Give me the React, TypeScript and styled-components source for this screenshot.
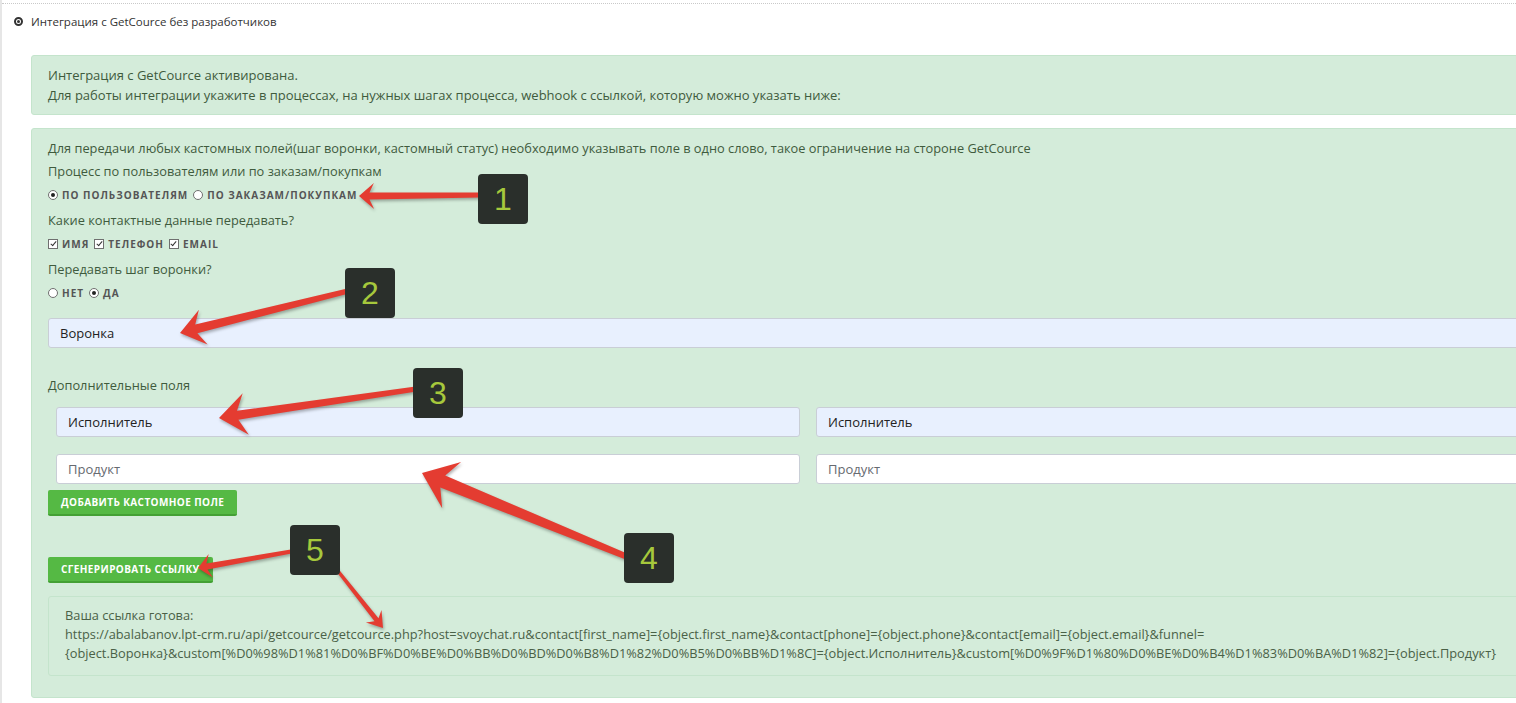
import React from "react";
import styled, { createGlobalStyle } from "styled-components";

type Pt = [number, number];

interface ArrowSpec {
  tail: Pt;
  tip: Pt;
  head: number;
  half: number;
  w0: number;
  w1: number;
}

const arrows: ArrowSpec[] = [
  { tail: [478, 195], tip: [357, 196], head: 15, half: 13, w0: 5, w1: 7 },
  { tail: [350, 290], tip: [178, 333], head: 24, half: 18, w0: 5, w1: 9 },
  { tail: [414, 389], tip: [217, 418], head: 27, half: 21, w0: 5, w1: 9 },
  { tail: [628, 558], tip: [420, 473], head: 32, half: 25, w0: 6, w1: 13 },
  { tail: [292, 551], tip: [196, 568], head: 13, half: 12, w0: 4, w1: 6 },
  { tail: [332, 566], tip: [381, 628], head: 15, half: 10, w0: 3, w1: 5 },
];

const badges = [
  { n: "1", x: 476, y: 174 },
  { n: "2", x: 343, y: 268 },
  { n: "3", x: 411, y: 368 },
  { n: "4", x: 622, y: 533 },
  { n: "5", x: 288, y: 525 },
];

const arrowPoints = ({ tail, tip, head, half, w0, w1 }: ArrowSpec) => {
  const dx = tip[0] - tail[0];
  const dy = tip[1] - tail[1];
  const len = Math.hypot(dx, dy);
  const ux = dx / len;
  const uy = dy / len;
  const nx = -uy;
  const ny = ux;
  const bx = tip[0] - ux * head;
  const by = tip[1] - uy * head;
  // shaft joins the head a little forward of the wings (swept-back look)
  const sx = tip[0] - ux * head * 0.7;
  const sy = tip[1] - uy * head * 0.7;
  const pts: Pt[] = [
    [tail[0] + (nx * w0) / 2, tail[1] + (ny * w0) / 2],
    [sx + (nx * w1) / 2, sy + (ny * w1) / 2],
    [bx + nx * half, by + ny * half],
    tip,
    [bx - nx * half, by - ny * half],
    [sx - (nx * w1) / 2, sy - (ny * w1) / 2],
    [tail[0] - (nx * w0) / 2, tail[1] - (ny * w0) / 2],
  ];
  return pts.map((p) => `${p[0].toFixed(1)},${p[1].toFixed(1)}`).join(" ");
};

const App = () => {
  return (
    <Page>
      <GlobalStyle />
      <Panel>
        <PanelHeader>
          <HeaderIcon />
          <HeaderTitle>Интеграция с GetCource без разработчиков</HeaderTitle>
        </PanelHeader>
        <PanelBody>
          <Alert>
            <Line>Интеграция с GetCource активирована.</Line>
            <Line>
              Для работы интеграции укажите в процессах, на нужных шагах
              процесса, webhook с ссылкой, которую можно указать ниже:
            </Line>
          </Alert>

          <Alert $gap={13} $padBottom={21} $size={12.8}>
            <Note>
              Для передачи любых кастомных полей(шаг воронки, кастомный статус)
              необходимо указывать поле в одно слово, такое ограничение на
              стороне GetCource
            </Note>

            <Question>Процесс по пользователям или по заказам/покупкам</Question>
            <Options>
              <Option>
                <Radio $checked />
                по пользователям
              </Option>
              <Option>
                <Radio />
                по заказам/покупкам
              </Option>
            </Options>

            <Question>Какие контактные данные передавать?</Question>
            <Options>
              <Option>
                <Check />
                имя
              </Option>
              <Option>
                <Check />
                телефон
              </Option>
              <Option>
                <Check />
                email
              </Option>
            </Options>

            <Question>Передавать шаг воронки?</Question>
            <Options $last>
              <Option>
                <Radio />
                нет
              </Option>
              <Option>
                <Radio $checked />
                да
              </Option>
            </Options>

            <TextInput $filled defaultValue="Воронка" $mb={27} />

            <SectionTitle>Дополнительные поля</SectionTitle>
            <FieldsGrid>
              <TextInput $filled defaultValue="Исполнитель" />
              <TextInput $filled defaultValue="Исполнитель" />
              <TextInput placeholder="Продукт" />
              <TextInput placeholder="Продукт" />
            </FieldsGrid>

            <GreenButton $mt={6}>Добавить кастомное поле</GreenButton>
            <GreenButton $mt={41}>Сгенерировать ссылку</GreenButton>

            <LinkBox>
              <LinkLine>Ваша ссылка готова:</LinkLine>
              <LinkLine>
                https://abalabanov.lpt-crm.ru/api/getcource/getcource.php?host=svoychat.ru&amp;contact[first_name]={"{object.first_name}"}&amp;contact[phone]={"{object.phone}"}&amp;contact[email]={"{object.email}"}&amp;funnel=
              </LinkLine>
              <LinkLine>
                {"{object.Воронка}"}&amp;custom[%D0%98%D1%81%D0%BF%D0%BE%D0%BB%D0%BD%D0%B8%D1%82%D0%B5%D0%BB%D1%8C]={"{object.Исполнитель}"}&amp;custom[%D0%9F%D1%80%D0%BE%D0%B4%D1%83%D0%BA%D1%82]={"{object.Продукт}"}
              </LinkLine>
            </LinkBox>
          </Alert>
        </PanelBody>
      </Panel>

      <Overlay width={1516} height={703} viewBox="0 0 1516 703">
        {arrows.map((a, i) => (
          <ArrowShape key={i} points={arrowPoints(a)} />
        ))}
      </Overlay>
      {badges.map((b) => (
        <Badge key={b.n} $x={b.x} $y={b.y}>
          {b.n}
        </Badge>
      ))}
    </Page>
  );
};

const GlobalStyle = createGlobalStyle`
  html, body {
    margin: 0;
    padding: 0;
    background: #ffffff;
  }
  body {
    font-family: "Open Sans", "Liberation Sans", sans-serif;
    overflow: hidden;
  }
`;

const Page = styled.div`
  position: relative;
  width: 1516px;
  height: 703px;
  overflow: hidden;
  border-left: 2px solid #e6e6e6;
  box-sizing: border-box;
`;

const Panel = styled.div`
  margin-top: 3px;
  border-top: 1px dotted #c9c9c9;
`;

const PanelHeader = styled.div`
  display: flex;
  align-items: center;
  height: 34px;
  padding-left: 12px;
`;

const HeaderIcon = styled.span`
  position: relative;
  width: 9px;
  height: 9px;
  box-sizing: border-box;
  border: 2px solid #333;
  border-radius: 50%;
  margin-right: 8px;

  &::after {
    content: "";
    position: absolute;
    left: 1px;
    top: 1px;
    width: 3px;
    height: 3px;
    border-radius: 50%;
    background: #333;
  }
`;

const HeaderTitle = styled.span`
  font-size: 11.5px;
  color: #333333;
`;

const PanelBody = styled.div`
  padding: 17px 0 0 29px;
`;

const Alert = styled.div<{ $gap?: number; $padBottom?: number; $size?: number }>`
  width: 1520px;
  margin-top: ${({ $gap }) => $gap || 0}px;
  padding: 9px 16px ${({ $padBottom }) => $padBottom || 9}px;
  background: #d4ecda;
  border: 1px solid #c4e4cc;
  border-radius: 3px;
  color: #3f5b3d;
  font-size: ${({ $size }) => $size || 13}px;
  line-height: 20px;
`;

const Line = styled.div``;

const Note = styled.div`
  margin-bottom: 3px;
`;

const Question = styled.div`
  margin-bottom: 4px;
`;

const Options = styled.div<{ $last?: boolean }>`
  display: flex;
  align-items: center;
  gap: 5px;
  height: 20px;
  margin-bottom: ${({ $last }) => ($last ? 15 : 5)}px;
`;

const Option = styled.label`
  display: inline-flex;
  align-items: center;
  gap: 4px;
  font-size: 10px;
  font-weight: 700;
  letter-spacing: 1px;
  text-transform: uppercase;
  color: #555555;
`;

const Radio = styled.span<{ $checked?: boolean }>`
  position: relative;
  width: 10px;
  height: 10px;
  box-sizing: border-box;
  border: 1px solid #6f6f6f;
  border-radius: 50%;
  background: #fff;

  &::after {
    content: "";
    display: ${({ $checked }) => ($checked ? "block" : "none")};
    position: absolute;
    left: 2px;
    top: 2px;
    width: 4px;
    height: 4px;
    border-radius: 50%;
    background: #222;
  }
`;

const Check = styled.span`
  position: relative;
  width: 10px;
  height: 10px;
  box-sizing: border-box;
  border: 1px solid #6f6f6f;
  background: #fff;

  &::after {
    content: "";
    position: absolute;
    left: 2.5px;
    top: 0px;
    width: 2px;
    height: 5px;
    border-right: 1px solid #333;
    border-bottom: 1px solid #333;
    transform: rotate(40deg);
  }
`;

const TextInput = styled.input<{ $filled?: boolean; $mb?: number }>`
  display: block;
  width: 100%;
  height: 30px;
  box-sizing: border-box;
  margin: 0 0 ${({ $mb }) => $mb || 0}px;
  padding: 0 11px;
  border: 1px solid #c9ced6;
  border-radius: 3px;
  background: ${({ $filled }) => ($filled ? "#e8f0fe" : "#ffffff")};
  font-family: "Open Sans", "Liberation Sans", sans-serif;
  font-size: 13px;
  color: #222222;
  outline: none;

  &::placeholder {
    color: #666a70;
    opacity: 1;
  }
`;

const SectionTitle = styled.div`
  margin-bottom: 12px;
`;

const FieldsGrid = styled.div`
  display: grid;
  grid-template-columns: 1fr 1fr;
  column-gap: 16px;
  row-gap: 17px;
  padding: 0 8px;
`;

const GreenButton = styled.button<{ $mt: number }>`
  display: block;
  height: 26px;
  margin-top: ${({ $mt }) => $mt}px;
  padding: 0 13px;
  border: none;
  border-bottom: 2px solid #43a034;
  border-radius: 2px;
  background: #55b944;
  color: #ffffff;
  font-family: "Open Sans", "Liberation Sans", sans-serif;
  font-size: 10px;
  font-weight: 700;
  letter-spacing: 0.4px;
  text-transform: uppercase;
  line-height: 24px;
`;

const LinkBox = styled.div`
  margin-top: 13px;
  padding: 9px 16px 12px;
  border: 1px solid #c4e4cc;
  border-radius: 3px;
  color: #4a6147;
  line-height: 19px;
`;

const LinkLine = styled.div`
  white-space: nowrap;
`;

const Overlay = styled.svg`
  position: absolute;
  left: 0;
  top: 0;
  pointer-events: none;
`;

const ArrowShape = styled.polygon`
  fill: #e43c31;
  filter: drop-shadow(1px 2px 1.5px rgba(0, 0, 0, 0.3));
`;

const Badge = styled.div<{ $x: number; $y: number }>`
  position: absolute;
  left: ${({ $x }) => $x}px;
  top: ${({ $y }) => $y}px;
  width: 50px;
  height: 50px;
  display: flex;
  align-items: center;
  justify-content: center;
  border-radius: 4px;
  background: #2a2f2b;
  color: #a6c83c;
  font-family: "Liberation Sans", Arial, sans-serif;
  font-size: 32px;
`;

export default App;
